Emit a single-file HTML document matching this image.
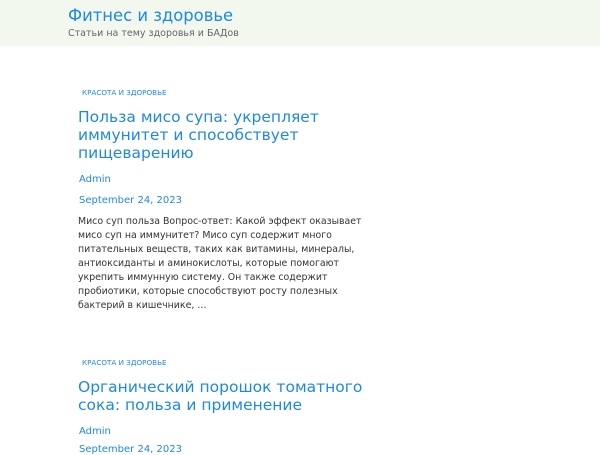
<!DOCTYPE html>
<html><head><meta charset="utf-8"><style>
body{margin:0;background:#fff;font-family:"DejaVu Sans","Liberation Sans",sans-serif;width:600px;height:450px;overflow:hidden}
.hd{background:#f2f8ee;height:46px;position:relative}
.t{position:absolute;left:68px;top:6px;font-size:16.4px;color:#1e88e5;white-space:nowrap}
.s{position:absolute;left:68px;top:28px;font-size:9.5px;color:#666;white-space:nowrap}
.a{position:absolute;left:78px;width:300px}
.c{font-size:7.2px;color:#1e88e5;margin-left:4px;text-transform:uppercase}
.h{font-size:15.5px;line-height:18px;color:#1e88e5;margin-top:11px}
.m{font-size:10px;color:#1e88e5;margin-left:1px}
.p{font-size:9.4px;line-height:14px;color:#333}
</style></head><body>
<div class="hd"><div class="t">Фитнес и здоровье</div><div class="s">Статьи на тему здоровья и БАДов</div></div>
<div class="a" style="top:88px">
<div class="c">Красота и здоровье</div>
<div class="h">Польза мисо супа: укрепляет иммунитет и способствует пищеварению</div>
<div class="m" style="margin-top:12px">Admin</div>
<div class="m" style="margin-top:10px">September 24, 2023</div>
<div class="p" style="margin-top:9px">Мисо суп польза Вопрос-ответ: Какой эффект оказывает мисо суп на иммунитет? Мисо суп содержит много питательных веществ, таких как витамины, минералы, антиоксиданты и аминокислоты, которые помогают укрепить иммунную систему. Он также содержит пробиотики, которые способствуют росту полезных бактерий в кишечнике, …</div>
</div>
<div class="a" style="top:358px">
<div class="c">Красота и здоровье</div>
<div class="h">Органический порошок томатного сока: польза и применение</div>
<div class="m" style="margin-top:12px">Admin</div>
<div class="m" style="margin-top:7px">September 24, 2023</div>
</div>
</body></html>
